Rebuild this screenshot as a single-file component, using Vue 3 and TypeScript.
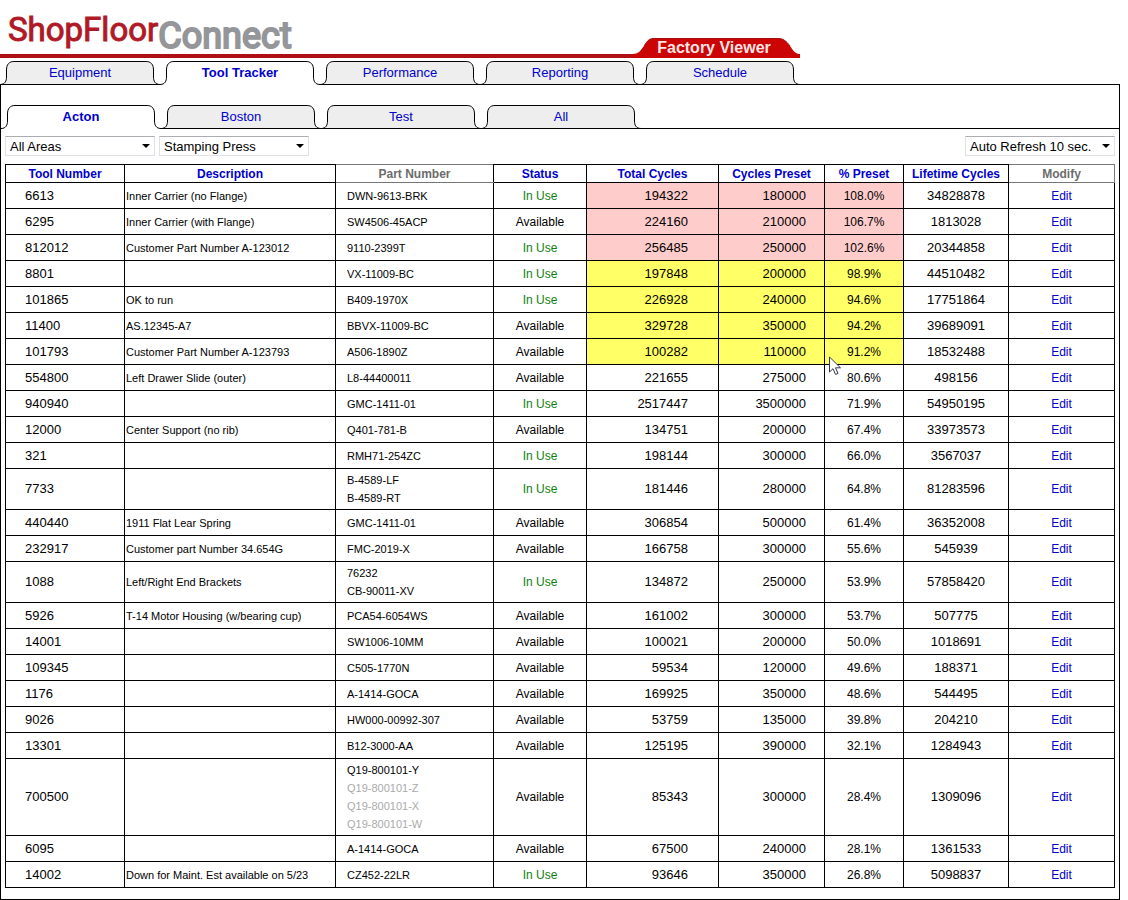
<script setup lang="ts">
import { ref } from 'vue'

type Level = 'over' | 'warn' | 'ok'

interface Tool {
  id: string
  description: string
  parts: string[]
  inUse: boolean
  total: number
  preset: number
  percent: string
  lifetime: number
  level: Level
}

function tool(
  id: string,
  description: string,
  parts: string,
  inUse: boolean,
  total: number,
  preset: number,
  percent: string,
  lifetime: number,
): Tool {
  const value = Number(percent)
  const level: Level = value > 100 ? 'over' : value > 90 ? 'warn' : 'ok'
  return { id, description, parts: parts.split('|'), inUse, total, preset, percent, lifetime, level }
}

const tools: Tool[] = [
  tool('6613', 'Inner Carrier (no Flange)', 'DWN-9613-BRK', true, 194322, 180000, '108.0', 34828878),
  tool('6295', 'Inner Carrier (with Flange)', 'SW4506-45ACP', false, 224160, 210000, '106.7', 1813028),
  tool('812012', 'Customer Part Number A-123012', '9110-2399T', true, 256485, 250000, '102.6', 20344858),
  tool('8801', '', 'VX-11009-BC', true, 197848, 200000, '98.9', 44510482),
  tool('101865', 'OK to run', 'B409-1970X', true, 226928, 240000, '94.6', 17751864),
  tool('11400', 'AS.12345-A7', 'BBVX-11009-BC', false, 329728, 350000, '94.2', 39689091),
  tool('101793', 'Customer Part Number A-123793', 'A506-1890Z', false, 100282, 110000, '91.2', 18532488),
  tool('554800', 'Left Drawer Slide (outer)', 'L8-44400011', false, 221655, 275000, '80.6', 498156),
  tool('940940', '', 'GMC-1411-01', true, 2517447, 3500000, '71.9', 54950195),
  tool('12000', 'Center Support (no rib)', 'Q401-781-B', false, 134751, 200000, '67.4', 33973573),
  tool('321', '', 'RMH71-254ZC', true, 198144, 300000, '66.0', 3567037),
  tool('7733', '', 'B-4589-LF|B-4589-RT', true, 181446, 280000, '64.8', 81283596),
  tool('440440', '1911 Flat Lear Spring', 'GMC-1411-01', false, 306854, 500000, '61.4', 36352008),
  tool('232917', 'Customer part Number 34.654G', 'FMC-2019-X', false, 166758, 300000, '55.6', 545939),
  tool('1088', 'Left/Right End Brackets', '76232|CB-90011-XV', true, 134872, 250000, '53.9', 57858420),
  tool('5926', 'T-14 Motor Housing (w/bearing cup)', 'PCA54-6054WS', false, 161002, 300000, '53.7', 507775),
  tool('14001', '', 'SW1006-10MM', false, 100021, 200000, '50.0', 1018691),
  tool('109345', '', 'C505-1770N', false, 59534, 120000, '49.6', 188371),
  tool('1176', '', 'A-1414-GOCA', false, 169925, 350000, '48.6', 544495),
  tool('9026', '', 'HW000-00992-307', false, 53759, 135000, '39.8', 204210),
  tool('13301', '', 'B12-3000-AA', false, 125195, 390000, '32.1', 1284943),
  tool('700500', '', 'Q19-800101-Y|Q19-800101-Z|Q19-800101-X|Q19-800101-W', false, 85343, 300000, '28.4', 1309096),
  tool('6095', '', 'A-1414-GOCA', false, 67500, 240000, '28.1', 1361533),
  tool('14002', 'Down for Maint. Est available on 5/23', 'CZ452-22LR', true, 93646, 350000, '26.8', 5098837),
]

const columns = [
  { key: 'tool', label: 'Tool Number', sortable: true },
  { key: 'desc', label: 'Description', sortable: true },
  { key: 'part', label: 'Part Number', sortable: false },
  { key: 'status', label: 'Status', sortable: true },
  { key: 'total', label: 'Total Cycles', sortable: true },
  { key: 'preset', label: 'Cycles Preset', sortable: true },
  { key: 'percent', label: '% Preset', sortable: true },
  { key: 'life', label: 'Lifetime Cycles', sortable: true },
  { key: 'modify', label: 'Modify', sortable: false },
]

const mainTabs = ['Equipment', 'Tool Tracker', 'Performance', 'Reporting', 'Schedule']
const plantTabs = ['Acton', 'Boston', 'Test', 'All']
const mainTab = ref('Tool Tracker')
const plantTab = ref('Acton')
const pointed = '101793'

const tabEdge =
  'M0 23.5C5 23.5 6.5 20 6.5 16V9C6.5 3.5 9 .5 14 .5H146C151 .5 153.5 3.5 153.5 9V16C153.5 20 155 23.5 160 23.5'
</script>

<template>
  <div class="page">
    <header class="masthead">
      <h1 class="logo"><span class="shop">ShopFloor</span><span class="connect">Connect</span></h1>
      <div class="ribbon">
        <span class="line"></span>
        <div class="plate">
          <svg viewBox="0 0 168 20" width="168" height="20" aria-hidden="true">
            <path d="M0 16C7 16 8 13 12 8C16 2 17 0 24 0H144C152 0 154 3 158 8C162 14 164 16 168 16V20H0Z" fill="#cb0505" />
            <path d="M12 8C16 2 17 .5 24 .5H144C152 .5 154 3 158 8" fill="none" stroke="#a80d0d" />
          </svg>
          <span class="plate-text">Factory Viewer</span>
        </div>
      </div>
    </header>

    <nav class="tabs main-tabs" aria-label="Sections">
      <a v-for="t in mainTabs" :key="t" href="#" class="tab" :class="{ active: t === mainTab }" @click.prevent="mainTab = t">
        <svg viewBox="0 0 160 24" width="160" height="24" aria-hidden="true">
          <path class="tab-fill" :d="tabEdge + 'V24H0Z'" />
          <path class="tab-edge" :d="tabEdge" />
          <path v-if="t !== mainTab" class="tab-edge" d="M0 23.5H160" />
        </svg>
        <span>{{ t }}</span>
      </a>
    </nav>

    <main class="panel">
      <nav class="tabs plants" aria-label="Plants">
        <a v-for="t in plantTabs" :key="t" href="#" class="tab" :class="{ active: t === plantTab }" @click.prevent="plantTab = t">
          <svg viewBox="0 0 160 24" width="160" height="24" aria-hidden="true">
            <path class="tab-fill" :d="tabEdge + 'V24H0Z'" />
            <path class="tab-edge" :d="tabEdge" />
            <path v-if="t !== plantTab" class="tab-edge" d="M0 23.5H160" />
          </svg>
          <span>{{ t }}</span>
        </a>
      </nav>

      <section class="body">
        <div class="filters">
          <div class="drop">
            <select aria-label="Area"><option>All Areas</option></select>
            <svg viewBox="0 0 8 4" width="8" height="4" aria-hidden="true"><path d="M0 0H8L4 4Z" /></svg>
          </div>
          <div class="drop">
            <select aria-label="Tool type"><option>Stamping Press</option></select>
            <svg viewBox="0 0 8 4" width="8" height="4" aria-hidden="true"><path d="M0 0H8L4 4Z" /></svg>
          </div>
          <div class="drop refresh">
            <select aria-label="Auto refresh"><option>Auto Refresh 10 sec.</option></select>
            <svg viewBox="0 0 8 4" width="8" height="4" aria-hidden="true"><path d="M0 0H8L4 4Z" /></svg>
          </div>
        </div>

        <table>
          <colgroup>
            <col v-for="c in columns" :key="c.key" :class="'w-' + c.key" />
          </colgroup>
          <thead>
            <tr>
              <th v-for="c in columns" :key="c.key" scope="col" :class="{ plain: !c.sortable }">
                <a v-if="c.sortable" href="#" @click.prevent>{{ c.label }}</a>
                <template v-else>{{ c.label }}</template>
              </th>
            </tr>
          </thead>
          <tbody>
            <tr v-for="r in tools" :key="r.id" :class="r.level">
              <td class="tool">{{ r.id }}</td>
              <td class="desc">{{ r.description }}</td>
              <td class="part">
                <div v-for="(p, i) in r.parts" :key="p" :class="{ faded: r.parts.length > 2 && i > 0 }">{{ p }}</div>
              </td>
              <td class="status" :class="{ running: r.inUse }">{{ r.inUse ? 'In Use' : 'Available' }}</td>
              <td class="total">{{ r.total }}</td>
              <td class="preset">{{ r.preset }}</td>
              <td class="percent">
                {{ r.percent }}%
                <svg v-if="r.id === pointed" class="pointer" viewBox="0 0 13 20" width="13" height="20" aria-hidden="true">
                  <path d="M.5 1V16L4 12.7L6.500 18.500L9 17.400L6.500 11.800H11.500Z" fill="#fff" stroke="#333a4d" />
                </svg>
              </td>
              <td class="life">{{ r.lifetime }}</td>
              <td class="modify"><a href="#" @click.prevent>Edit</a></td>
            </tr>
          </tbody>
        </table>
      </section>
    </main>
  </div>
</template>

<style>
body {
  margin: 0;
  background: #fff;
}
</style>

<style scoped>
.page {
  padding-right: 8px;
  font-family: "Liberation Sans", Arial, sans-serif;
  font-size: 12px;
  color: #000;
}
a {
  color: #0000cc;
  text-decoration: none;
}
.masthead {
  display: grid;
  max-width: 800px;
  height: 58px;
  margin-bottom: 3px;
}
.logo,
.ribbon {
  grid-area: 1 / 1;
}
.logo {
  display: flex;
  align-items: flex-start;
  margin: 0;
  padding-left: 8px;
  font-family: Roboto, sans-serif;
  font-weight: 400;
  line-height: 44px;
}
.shop {
  padding-top: 8px;
  color: #b01a26;
  font-size: 33px;
  -webkit-text-stroke: 1px #b01a26;
}
.connect {
  padding-top: 14px;
  color: #949699;
  font-size: 36px;
  -webkit-text-stroke: 2px #949699;
}
.ribbon {
  display: flex;
  align-items: flex-end;
}
.line {
  flex: 1;
  height: 4px;
  background: #b01015;
}
.plate {
  display: grid;
  height: 20px;
}
.plate svg,
.plate-text {
  grid-area: 1 / 1;
}
.plate-text {
  padding-right: 4px;
  color: #ffe4e4;
  font-size: 16px;
  font-weight: 700;
  line-height: 20px;
  text-align: center;
}
.tabs {
  display: flex;
}
.main-tabs {
  position: relative;
  z-index: 1;
}
.tab {
  display: grid;
  width: 160px;
  height: 24px;
  color: #0000cc;
  font-size: 13px;
  line-height: 24px;
  text-align: center;
}
.tab svg,
.tab span {
  grid-area: 1 / 1;
}
.tab-fill {
  fill: #eee;
}
.tab-edge {
  fill: none;
  stroke: #000;
}
.active {
  font-weight: 700;
}
.active .tab-fill {
  fill: #fff;
}
.panel {
  margin-top: -1px;
  border: 1px solid #000;
}
.plants {
  margin-top: 20px;
  background: linear-gradient(#000, #000) bottom / 100% 1px no-repeat;
}
.body {
  padding: 7px 4px 11px;
}
.filters {
  display: flex;
  gap: 4px;
  margin-bottom: 8px;
}
.drop {
  display: grid;
  width: 150px;
  align-items: center;
}
.drop select,
.drop svg {
  grid-area: 1 / 1;
}
.drop svg {
  justify-self: end;
  margin-right: 5px;
  pointer-events: none;
}
select {
  appearance: none;
  width: 100%;
  height: 20px;
  padding: 0 16px 0 4px;
  border: 1px solid #dfe1e6;
  border-top-color: #abadb3;
  border-radius: 0;
  background: #fff;
  color: #000;
  font-family: inherit;
  font-size: 13px;
}
.refresh {
  margin-left: auto;
}
table {
  width: 100%;
  table-layout: fixed;
  border-collapse: collapse;
}
.w-tool {
  width: 119px;
}
.w-part {
  width: 158px;
}
.w-status {
  width: 93px;
}
.w-total {
  width: 132px;
}
.w-preset,
.w-modify {
  width: 106px;
}
.w-percent {
  width: 79px;
}
.w-life {
  width: 105px;
}
thead tr {
  height: 18px;
}
tbody tr {
  height: 26px;
}
th,
td {
  padding: 2px 0;
  border: 1px solid #000;
  line-height: 18px;
  text-align: center;
}
th {
  padding: 1px 0 0;
  line-height: 16px;
}
.plain {
  border-top-color: #777;
  border-bottom-color: #777;
  color: #6c6c6c;
}
.plain:last-child {
  border-right-color: #777;
}
.tool,
.total,
.preset,
.life {
  font-size: 13px;
}
.tool {
  padding-left: 19px;
  text-align: left;
}
.desc,
.part {
  font-size: 11px;
  text-align: left;
}
.desc {
  padding-left: 1px;
}
.part {
  padding-left: 11px;
}
.faded {
  color: #aaa;
}
.running {
  color: #108010;
}
.total {
  padding-right: 30px;
  text-align: right;
}
.preset {
  padding-right: 18px;
  text-align: right;
}
.over .total,
.over .preset,
.over .percent {
  background: #ffcccc;
}
.warn .total,
.warn .preset,
.warn .percent {
  background: #ffff66;
}
.percent {
  position: relative;
}
.pointer {
  position: absolute;
  z-index: 2;
  top: 17px;
  left: 4px;
}
</style>
